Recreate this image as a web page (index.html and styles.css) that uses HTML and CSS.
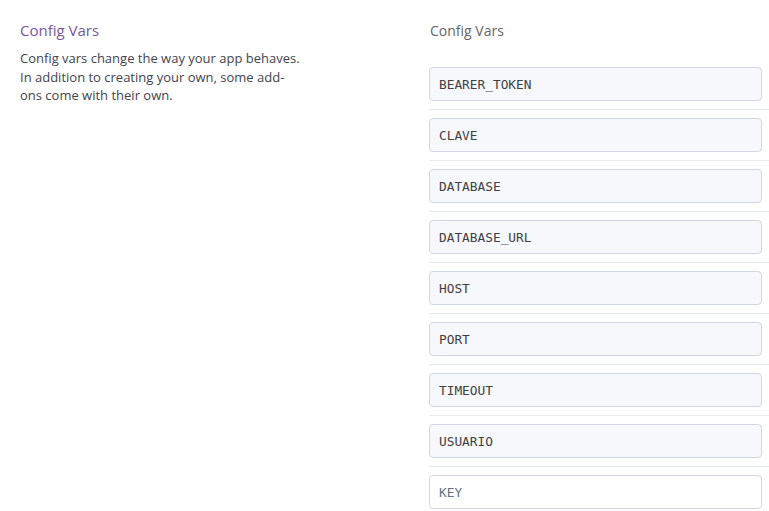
FILE: index.html
```html
<!DOCTYPE html>
<html>
<head>
<meta charset="utf-8">
<link rel="stylesheet" href="styles.css">
</head>
<body>
<div class="page">
  <section class="intro">
    <h2 class="intro-title">Config Vars</h2>
    <p class="intro-text">Config vars change the way your app behaves. In addition to creating your own, some add-ons come with their own.</p>
  </section>
  <section class="vars">
    <h3 class="vars-title">Config Vars</h3>
    <ul class="var-list">
      <li class="var-row"><input class="var-key" type="text" value="BEARER_TOKEN"></li>
      <li class="var-row"><input class="var-key" type="text" value="CLAVE"></li>
      <li class="var-row"><input class="var-key" type="text" value="DATABASE"></li>
      <li class="var-row"><input class="var-key" type="text" value="DATABASE_URL"></li>
      <li class="var-row"><input class="var-key" type="text" value="HOST"></li>
      <li class="var-row"><input class="var-key" type="text" value="PORT"></li>
      <li class="var-row"><input class="var-key" type="text" value="TIMEOUT"></li>
      <li class="var-row"><input class="var-key" type="text" value="USUARIO"></li>
      <li class="var-row var-row-new"><input class="var-key var-key-new" type="text" placeholder="KEY"></li>
    </ul>
  </section>
</div>
</body>
</html>
```

FILE: styles.css
```css
html, body {
  margin: 0;
  padding: 0;
  background: #ffffff;
  overflow: hidden;
}
.page {
  display: flex;
  width: 769px;
  height: 511px;
  font-family: "Open Sans", "Liberation Sans", sans-serif;
}
.intro {
  width: 409px;
  padding-left: 20px;
  box-sizing: border-box;
}
.intro-title {
  margin: 19px 0 0;
  font-size: 15px;
  font-weight: 400;
  line-height: 22px;
  color: #79589f;
}
.intro-text {
  margin: 8px 0 0;
  width: 282px;
  font-size: 13px;
  line-height: 18.5px;
  color: #3f4450;
}
.vars {
  flex: 1;
  padding-left: 20px;
}
.vars-title {
  margin: 21px 0 0 1px;
  font-size: 14px;
  font-weight: 400;
  line-height: 20px;
  color: #62666f;
}
.var-list {
  list-style: none;
  margin: 26px 0 0;
  padding: 0;
}
.var-row {
  padding: 8px 0;
  border-bottom: 1px solid #e6eaf2;
}
.var-row:first-child {
  padding-top: 0;
}
.var-row-new {
  border-bottom: none;
}
.var-key {
  display: block;
  width: 333px;
  height: 34px;
  box-sizing: border-box;
  margin: 0;
  padding: 0 9px;
  border: 1px solid #cfd7e6;
  border-radius: 4px;
  background: #f7f8fb;
  font-family: "DejaVu Sans Mono", monospace;
  font-size: 12.8px;
  color: #3f3f44;
  outline: none;
}
.var-key-new {
  background: #ffffff;
}
.var-key-new::placeholder {
  color: #5f7389;
  opacity: 1;
}
```
